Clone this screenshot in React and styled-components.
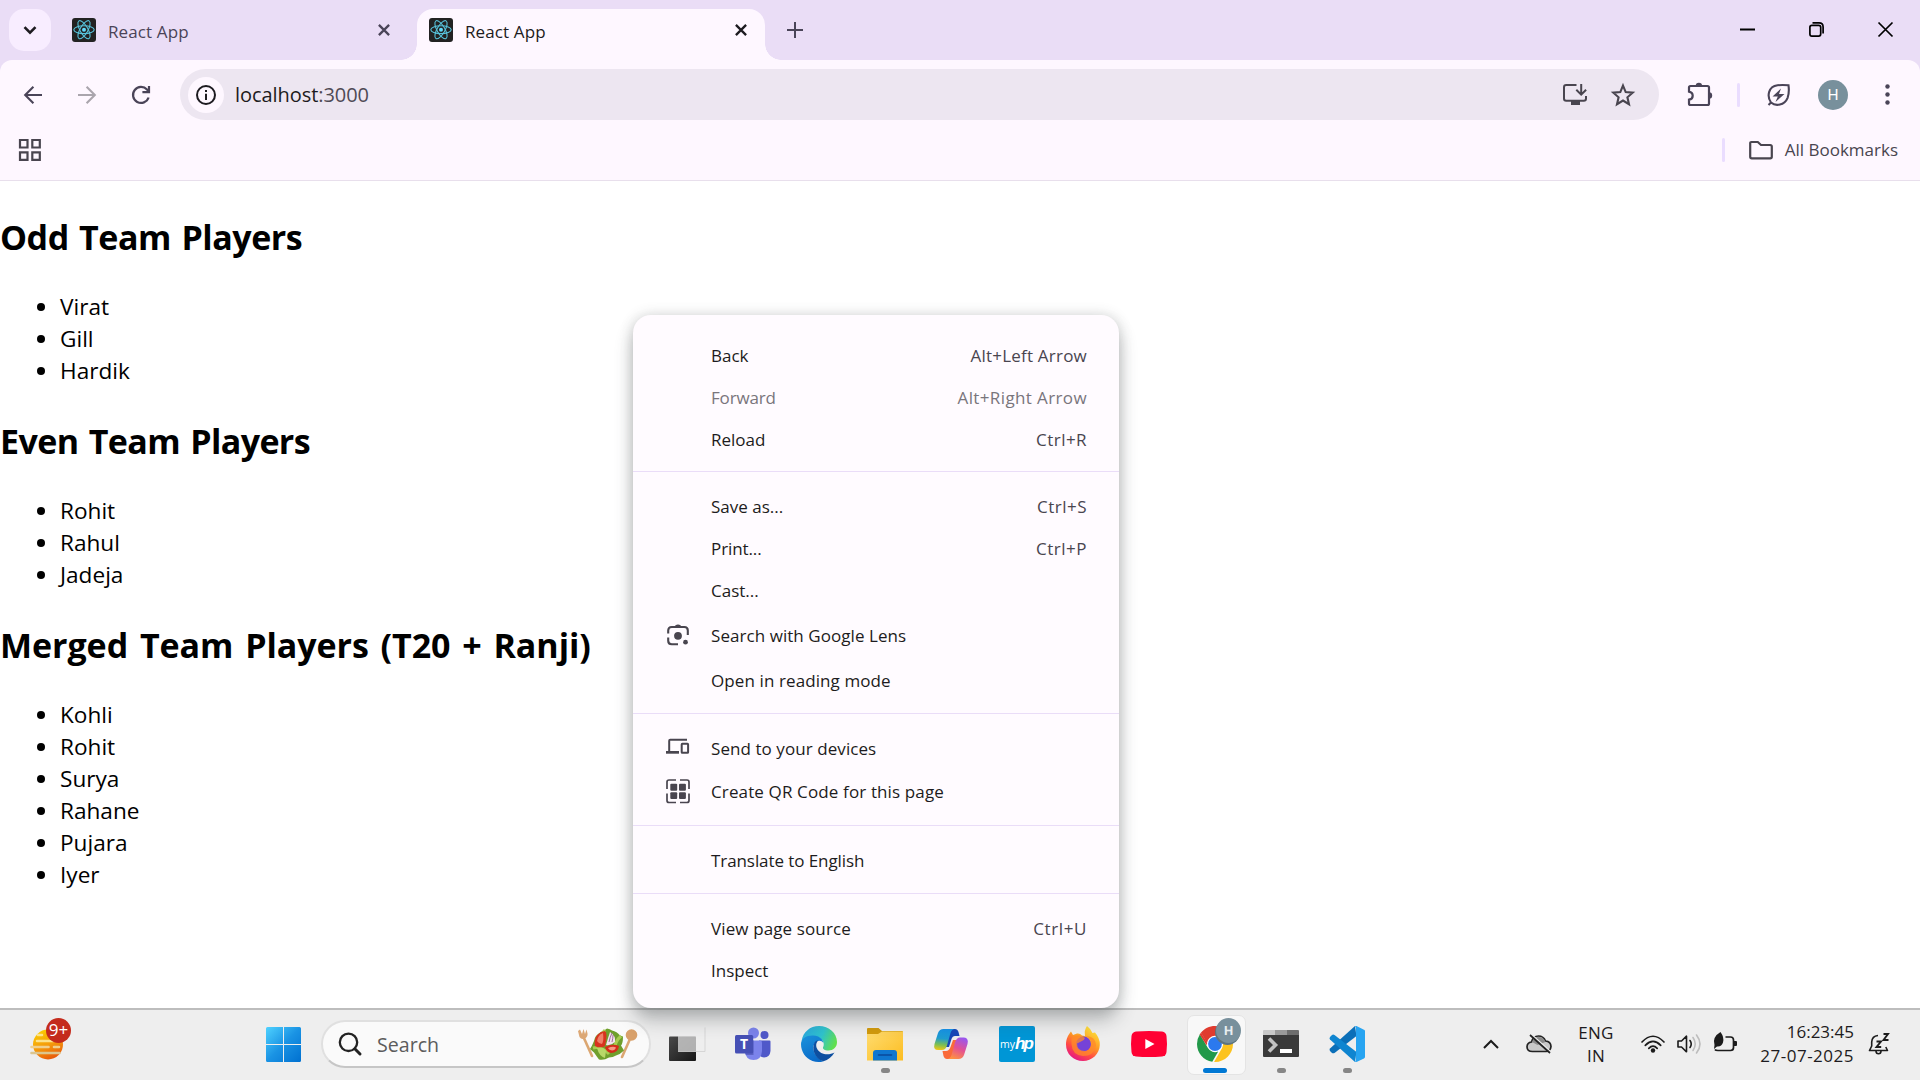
import React from "react";
import styled, { createGlobalStyle, css } from "styled-components";

const GlobalStyle = createGlobalStyle`
  * { box-sizing: border-box; }
  html, body { margin: 0; padding: 0; background: #fff; }
  body { font-family: "Open Sans", "Noto Sans", sans-serif; overflow: hidden; }
`;

/* ---------- shared ---------- */

const Screen = styled.div`
  position: relative;
  width: 1920px;
  height: 1080px;
  display: flex;
  flex-direction: column;
  overflow: hidden;
  background: #fff;
`;

const Svg = styled.svg.attrs((p) => ({
  viewBox: `0 0 ${p.$vw || p.$w} ${p.$vh || p.$vw || p.$h || p.$w}`,
}))`
  display: block;
  flex: none;
  width: ${(p) => p.$w}px;
  height: ${(p) => p.$h || p.$w}px;
  overflow: visible;
`;

const Label = styled.span`
  white-space: nowrap;
  font-size: ${(p) => p.$size || 17}px;
  line-height: 24px;
  letter-spacing: ${(p) => p.$ls || 0}px;
  color: ${(p) => p.$color || "#1d1b20"};
`;

/* ---------- tab strip ---------- */

const BrowserTop = styled.div`
  flex: none;
  height: 181px;
  display: flex;
  flex-direction: column;
  background: #eaddf6;
`;

const TabStrip = styled.div`
  flex: none;
  height: 60px;
  display: flex;
  align-items: flex-start;
  padding: 9px 0 0 9px;
`;

const TabSearch = styled.div`
  width: 42px;
  height: 42px;
  border-radius: 15px;
  background: #f8edff;
  display: flex;
  align-items: center;
  justify-content: center;
`;

const Tab = styled.div`
  position: relative;
  width: ${(p) => p.$width}px;
  height: ${(p) => (p.$active ? 51 : 42)}px;
  margin-left: ${(p) => p.$gap}px;
  padding: 9px 15px 9px 12px;
  display: flex;
  align-items: flex-start;
  gap: 12px;
  ${(p) =>
    p.$active &&
    css`
      background: #fef7ff;
      border-radius: 16px 16px 0 0;
      &::before,
      &::after {
        content: "";
        position: absolute;
        bottom: 0;
        width: 16px;
        height: 16px;
      }
      &::before {
        left: -16px;
        background: radial-gradient(circle at 0 0, transparent 15.5px, #fef7ff 16px);
      }
      &::after {
        right: -16px;
        background: radial-gradient(circle at 100% 0, transparent 15.5px, #fef7ff 16px);
      }
    `}
`;

const TabTitle = styled(Label)`
  flex: 1;
  padding-top: 2px;
`;

const CloseWrap = styled.div`
  width: 18px;
  height: 24px;
  display: flex;
  align-items: center;
  justify-content: center;
`;

const NewTab = styled.div`
  width: 42px;
  height: 42px;
  margin-left: 9px;
  display: flex;
  align-items: center;
  justify-content: center;
`;

const WindowControls = styled.div`
  margin-left: auto;
  display: flex;
  height: 40px;
`;

const WindowButton = styled.div`
  width: 69px;
  height: 40px;
  display: flex;
  align-items: center;
  justify-content: center;
`;

/* ---------- toolbar ---------- */

const ToolbarArea = styled.div`
  flex: 1;
  display: flex;
  flex-direction: column;
  background: #fef7ff;
  border-radius: 12px 12px 0 0;
  border-bottom: 1px solid #e8dfec;
`;

const Toolbar = styled.div`
  height: 69px;
  padding: 0 6px 0 6px;
  display: flex;
  align-items: center;
`;

const ToolButton = styled.div`
  width: 54px;
  height: 51px;
  display: flex;
  align-items: center;
  justify-content: center;
`;

const Omnibox = styled.div`
  width: 1479px;
  height: 51px;
  margin-left: 12px;
  padding: 0 12px 0 8px;
  border-radius: 26px;
  background: #ede6f1;
  display: flex;
  align-items: center;
`;

const SiteInfo = styled.div`
  width: 36px;
  height: 36px;
  border-radius: 50%;
  background: #fef7ff;
  display: flex;
  align-items: center;
  justify-content: center;
  margin-right: 11px;
`;

const Url = styled(Label)`
  flex: 1;
  line-height: 28px;
  span { color: #4f4a55; }
`;

const OmniAction = styled.div`
  width: 48px;
  display: flex;
  align-items: center;
  justify-content: center;
`;

const ToolbarEnd = styled.div`
  flex: 1;
  display: flex;
  align-items: center;
  padding-left: 14px;
`;

const VBar = styled.div`
  width: 3px;
  height: 24px;
  border-radius: 2px;
  background: #eaddff;
  margin: ${(p) => p.$m || "0"};
`;

const Avatar = styled.div`
  width: 30px;
  height: 30px;
  margin: 0 12px;
  border-radius: 50%;
  background: #78909c;
  color: #fff;
  font: 400 15.5px/30px Roboto, sans-serif;
  text-align: center;
`;

const BookmarksBar = styled.div`
  height: 51px;
  display: flex;
  align-items: center;
  padding: 0 22px 9px 19px;
`;

const AllBookmarks = styled.div`
  margin-left: auto;
  display: flex;
  align-items: center;
`;

const FolderWrap = styled.div`
  margin-right: 12px;
`;

/* ---------- page ---------- */

const Page = styled.main`
  flex: 1;
  padding-top: 32px;
  color: #000;
`;

const TeamHeading = styled.h2`
  margin: 0 0 30px;
  font-size: 34px;
  line-height: 48px;
  font-weight: 700;
  letter-spacing: ${(p) => p.$ls}px;
  word-spacing: ${(p) => p.$ws}px;
`;

const TeamList = styled.ul`
  margin: 0 0 30px;
  padding: 0 0 0 60px;
  font-size: 22.6px;
  line-height: 32px;
`;

/* ---------- context menu ---------- */

const Menu = styled.div`
  position: absolute;
  left: 633px;
  top: 315px;
  width: 486px;
  height: 693px;
  padding-top: 20px;
  border-radius: 18px;
  background: #fffbff;
  box-shadow: 0 12px 18px rgba(60, 64, 67, 0.32), 0 0 14px rgba(60, 64, 67, 0.2);
  z-index: 5;
`;

const MenuRow = styled.div`
  height: ${(p) => p.$h || 42}px;
  padding: 0 32px 0 33px;
  display: flex;
  align-items: center;
`;

const MenuIcon = styled.div`
  width: 24px;
  margin-right: 21px;
  padding-bottom: 2px;
`;

const MenuLabel = styled(Label)`
  flex: 1;
`;

const MenuDivider = styled.div`
  height: 1px;
  margin: ${(p) => p.$top || 11}px 0 ${(p) => p.$bottom || 14}px;
  background: #eaddf8;
`;

/* ---------- taskbar ---------- */

const Taskbar = styled.div`
  flex: none;
  height: 72px;
  border-top: 2px solid #bdbdbd;
  background: #eee;
  display: flex;
  align-items: center;
  padding-bottom: 2px;
`;

const Widgets = styled.div`
  position: relative;
  width: 33px;
  margin-left: 30px;
`;

const Badge = styled.div`
  position: absolute;
  left: 16px;
  top: -11px;
  width: 25px;
  height: 25px;
  border-radius: 50%;
  background: #c42b1c;
  color: #fff;
  font-size: 17px;
  line-height: 24px;
  text-align: center;
`;

const StartButton = styled.div`
  width: 36px;
  margin-left: 203px;
`;

const SearchBox = styled.div`
  width: 330px;
  height: 48px;
  margin-left: 19px;
  padding: 0 11px 0 15px;
  border: 2px solid #e0e0e0;
  border-bottom-color: #c6c6c6;
  border-radius: 24px;
  background: #fafafa;
  display: flex;
  align-items: center;
`;

const SearchLabel = styled(Label)`
  flex: 1;
  margin-left: 15px;
  padding-top: 1px;
`;

const Apps = styled.div`
  display: flex;
  margin-left: 3px;
`;

const AppSlot = styled.div`
  position: relative;
  width: 66px;
  height: 60px;
  display: flex;
  align-items: center;
  justify-content: center;
  &::before {
    content: "";
    display: ${(p) => (p.$active ? "block" : "none")};
    position: absolute;
    left: 5px;
    top: 1px;
    width: 57px;
    height: 58px;
    border-radius: 7px;
    background: #f8f8f8;
    border: 1.5px solid #e4e4e4;
  }
  &::after {
    content: "";
    display: ${(p) => (p.$open || p.$active ? "block" : "none")};
    position: absolute;
    left: ${(p) => (p.$active ? 21 : 28.5)}px;
    top: 54px;
    width: ${(p) => (p.$active ? 24 : 9)}px;
    height: 5px;
    border-radius: 3px;
    background: ${(p) => (p.$active ? "#0078d4" : "#868686")};
  }
  & > * { position: relative; }
`;

const MyHp = styled.div`
  width: 36px;
  height: 36px;
  border-radius: 2px;
  background: #0096d6;
  color: #fff;
  display: flex;
  align-items: center;
  justify-content: center;
  font: 10.5px/36px "Open Sans", sans-serif;
  b {
    font: italic 700 17px/34px "Liberation Sans Narrow", "Liberation Sans", sans-serif;
    letter-spacing: -2px;
    margin-right: 2px;
  }
`;

const ProfileDot = styled.div`
  position: absolute;
  left: 19px;
  top: -8px;
  width: 25px;
  height: 25px;
  border-radius: 50%;
  background: #78909c;
  box-shadow: -1px 2px 0 #5d747f;
  color: #e8eef0;
  font: 700 13px/25px Roboto, sans-serif;
  text-align: center;
`;

const IconBox = styled.div`
  position: relative;
  width: 36px;
  height: 36px;
`;

const Tray = styled.div`
  margin-left: auto;
  padding-right: 16px;
  display: flex;
  align-items: center;
`;

const TrayItem = styled.div`
  width: ${(p) => p.$w}px;
  display: flex;
  justify-content: center;
`;

const Stack = styled.div`
  width: ${(p) => p.$w}px;
  display: flex;
  flex-direction: column;
  align-items: ${(p) => p.$align};
  span { line-height: ${(p) => p.$lh || 24}px; }
`;

/* ---------- icons ---------- */

const ReactIcon = () => (
  <Svg $w={24}>
    <rect width="24" height="24" rx="3" fill="#222" />
    <g fill="none" stroke="#58c4dc" strokeWidth="1.1">
      <ellipse cx="12" cy="11.7" rx="10.2" ry="3.9" />
      <ellipse cx="12" cy="11.7" rx="10.2" ry="3.9" transform="rotate(60 12 11.7)" />
      <ellipse cx="12" cy="11.7" rx="10.2" ry="3.9" transform="rotate(120 12 11.7)" />
    </g>
    <circle cx="12" cy="11.7" r="2" fill="#61dafb" />
  </Svg>
);

const CloseIcon = ({ color }) => (
  <Svg $w={12}>
    <path d="M.9.9l10.2 10.2M11.1.9L.9 11.1" stroke={color} strokeWidth="2.3" fill="none" />
  </Svg>
);

const BackIcon = ({ color, flip }) => (
  <Svg $w={18}>
    <path
      d="M18 9H1.6M9.4 .8L1.2 9l8.2 8.2"
      fill="none"
      stroke={color}
      strokeWidth="2.1"
      transform={flip ? "matrix(-1 0 0 1 18 0)" : undefined}
    />
  </Svg>
);

const ReloadIcon = () => (
  <Svg $w={18}>
    <path d="M16.6 11.5A8 8 0 1 1 15 3.6L16.8 5.6" fill="none" stroke="#4a4458" strokeWidth="2.2" />
    <path d="M17 0v6.2h-6.6" fill="none" stroke="#4a4458" strokeWidth="2.2" />
  </Svg>
);

const InstallIcon = () => (
  <Svg $w={24}>
    <path d="M13.5 2H3.2Q1 2 1 4.200V15.500Q1 17.700 3.200 17.700H20.800Q23 17.700 23 15.500V13" fill="none" stroke="#49454f" strokeWidth="2" />
    <path d="M8 18h9v4H8z" fill="#49454f" />
    <path d="M18.200 1v10.200M13.300 6.800l4.900 4.900 4.900-4.900" fill="none" stroke="#49454f" strokeWidth="2" />
  </Svg>
);

const StarIcon = () => (
  <Svg $w={24}>
    <path d="M12 2.600l2.700 6.500 7 .6-5.300 4.600 1.600 6.900L12 17.500l-6 3.700 1.600-6.900-5.300-4.600 7-.6z" fill="none" stroke="#49454f" strokeWidth="2.100" />
  </Svg>
);

const ExtensionIcon = () => (
  <Svg $w={24}>
    <path
      d="M2.500 3H19.500Q21 3 21 4.500V20.500Q21 22 19.500 22H2.500Q1 22 1 20.500V16.700Q4.700 16 4.700 12.700Q4.700 9.300 1 8.600V4.500Q1 3 2.500 3Z"
      fill="none" stroke="#4a4458" strokeWidth="2.200"
    />
    <path d="M7.700 3a3.200 3.200 0 0 1 6.400 0zM21 9.300a3.200 3.200 0 0 1 0 6.400z" fill="#4a4458" />
  </Svg>
);

const LeafIcon = () => (
  <Svg $w={24}>
    <path d="M4 19.500C-.5 13 1.500 3.500 10.500 2.300C14 1.800 18.500 2 21.500 2.300C22 6 22 11 20.600 14.800C17.500 22.500 8.500 23.500 4 19.500zM4.500 19L1.500 22" fill="none" stroke="#4a4458" strokeWidth="2.100" />
    <path d="M14 5.500l-8.500 8h5.300l-2.300 5.500 9-8h-5.500z" fill="#4a4458" />
  </Svg>
);

const FolderIcon = () => (
  <Svg $w={24} $h={20} $vw={24} $vh={20}>
    <path d="M1.200 3.200Q1.200 2 2.400 2H8.800L12 5H21.200Q22.800 5 22.800 6.500V16.800Q22.800 18.300 21.200 18.300H2.800Q1.200 18.300 1.200 16.800z" fill="none" stroke="#49454f" strokeWidth="2.200" />
  </Svg>
);

const LensIcon = () => (
  <Svg $w={24}>
    <g fill="none" stroke="#49454f" strokeWidth="2.100">
      <path d="M2.200 10.500V7.500Q2.200 4 5.700 4H18.300Q21.800 4 21.800 7.500V12" />
      <path d="M2.200 14.500V17.700Q2.200 21.200 5.700 21.200H12" />
    </g>
    <path d="M8.500 4.300Q9 1.600 12 1.600T15.500 4.300z" fill="#49454f" />
    <circle cx="12" cy="12.800" r="3.900" fill="#49454f" />
    <circle cx="19.500" cy="19.200" r="2.400" fill="#49454f" />
  </Svg>
);

const DevicesIcon = () => (
  <Svg $w={24}>
    <path d="M3.200 17V4.800Q3.200 3.800 4.200 3.800H21" fill="none" stroke="#49454f" strokeWidth="2" />
    <path d="M0 15h13v2.700H0z" fill="#49454f" />
    <rect x="15.700" y="7.800" width="6.400" height="9" rx=".6" fill="none" stroke="#49454f" strokeWidth="2" />
  </Svg>
);

const QrIcon = () => (
  <Svg $w={24}>
    <path d="M10 1H3Q1 1 1 3V10M14 1H21Q23 1 23 3V10M10 23.500H3Q1 23.500 1 21.500V14.500M14 23.500H21Q23 23.500 23 21.500V14.500" fill="none" stroke="#49454f" strokeWidth="1.700" />
    <g fill="#49454f">
      <rect x="4.300" y="4.800" width="6.900" height="6.900" rx="1" />
      <rect x="13" y="4.800" width="6.900" height="6.900" rx="1" />
      <rect x="4.300" y="13.200" width="6.900" height="6.900" rx="1" />
      <rect x="13" y="13.200" width="6.900" height="6.900" rx="1" />
    </g>
  </Svg>
);

const SunIcon = () => (
  <Svg $w={33} $h={31} $vw={33} $vh={31}>
    <defs>
      <linearGradient id="sun" x1="0.2" y1="0" x2="0.6" y2="1">
        <stop offset="0" stopColor="#fbd000" />
        <stop offset=".55" stopColor="#f49a0b" />
        <stop offset="1" stopColor="#e8590c" />
      </linearGradient>
    </defs>
    <circle cx="18" cy="15.500" r="15" fill="url(#sun)" />
    <g strokeLinecap="round" strokeWidth="2.600">
      <path d="M8 6h4M7 12h16" stroke="#fce28a" />
      <path d="M1.500 18h17M24 18h5" stroke="#f0cf8c" />
      <path d="M1.500 24h28" stroke="#dcc58e" />
    </g>
  </Svg>
);

const WindowsIcon = () => (
  <Svg $w={35}>
    <defs>
      <linearGradient id="win" x1="0" y1="0" x2="1" y2="1">
        <stop offset="0" stopColor="#4fd2ff" />
        <stop offset=".5" stopColor="#1a93e4" />
        <stop offset="1" stopColor="#0070d0" />
      </linearGradient>
    </defs>
    <path d="M1.500 0H17V17H0V1.500Q0 0 1.500 0zM18 0H33.500Q35 0 35 1.500V17H18zM0 18H17V35H1.500Q0 35 0 33.500zM18 18H35V33.500Q35 35 33.500 35H18z" fill="url(#win)" />
  </Svg>
);

const SearchIcon = () => (
  <Svg $w={24}>
    <circle cx="10.500" cy="10.300" r="8.700" fill="none" stroke="#222" strokeWidth="2.300" />
    <path d="M16.800 16.800l5.200 5.200" stroke="#222" strokeWidth="3" strokeLinecap="round" />
  </Svg>
);

const SaladIcon = () => (
  <Svg $w={61} $h={32} $vw={61} $vh={32}>
    <path d="M6 8l9 20" stroke="#dba671" strokeWidth="2.600" strokeLinecap="round" />
    <path d="M1 3l1.500 6q2 3 5.500 1.500 3-2 2.500-5L9.500 1.500 8 6 6.500 1 5 6 3 1.500z" fill="#dca876" />
    <path d="M53 11L45 29" stroke="#dba671" strokeWidth="2.600" strokeLinecap="round" />
    <circle cx="54.500" cy="7" r="5.800" fill="#d8a06a" />
    <path d="M13 21q2-3 4-8 1-6 7-9 3-1 6-3.500 3 .5 5 2 5 1 8 5l3 1q0 7-2 9l3 5q-4 4-8 5-3 2-7 2-5 3-10 2-3-4-5-7z" fill="#6f9f2c" />
    <path d="M28 2q-6 6-6 14M44 8q-7 6-6 14M16 20q8-2 16 6" stroke="#a9cc51" strokeWidth="3" fill="none" />
    <path d="M18 18q-2-9 6-14l4-1q3 2 0 15-5 3-10 0z" fill="#d8331f" />
    <path d="M20 13q1-6 6-8 1 8-1 11-3 0-5-3z" fill="#f0806a" />
    <path d="M29 17q2-7 4-13 6 4 5 10-4 4-9 3z" fill="#f3e4ee" />
    <path d="M32 14q1-5 3-9M35 14q1-4 1-7" stroke="#a0699a" strokeWidth="1" fill="none" />
    <path d="M28 19q8-4 14-1-1 7-8 7-5-1-6-6z" fill="#d42c1b" />
    <path d="M31 20q5-2 8-.5-1 3-4 3-3-.5-4-2.500z" fill="#f49a84" />
    <path d="M20 20q6-2 9 3l-1 7q-6-2-8-10z" fill="#b8d868" />
  </Svg>
);

const TaskViewIcon = () => (
  <Svg $w={36}>
    <defs>
      <linearGradient id="tv" x1="0" y1="0" x2="1" y2="1">
        <stop offset="0" stopColor="#4a4a4a" />
        <stop offset="1" stopColor="#161616" />
      </linearGradient>
    </defs>
    <rect x="0" y="10.500" width="27" height="24.500" rx="1" fill="url(#tv)" />
    <rect x="9" y="1.500" width="27" height="24" rx="1" fill="#eee" fillOpacity=".72" />
    <path d="M9 10.500H27V25.500H9z" fill="#aaa" fillOpacity=".45" />
    <path d="M9 25.500H36V1.500" fill="none" stroke="#cfcfcf" strokeWidth=".8" />
  </Svg>
);

const TeamsIcon = () => (
  <Svg $w={36}>
    <circle cx="18.500" cy="7" r="5.500" fill="#7b83eb" />
    <circle cx="29.500" cy="9" r="4" fill="#5059c9" />
    <path d="M24 14.500H34.500Q35.500 14.500 35.500 15.700V25Q35 31 29 31.500 24 31 23 26z" fill="#5059c9" />
    <path d="M11 14.500H25Q27 14.500 27 16.500V25Q26.500 34 18.500 34 10.500 34 10 25z" fill="#7b83eb" />
    <path d="M10 14.500H18.500V29H10.800Q10 27 10 25z" fill="#5b62c4" />
    <rect x="0" y="9" width="18.200" height="18.500" rx="1.500" fill="#4650b5" />
    <text x="9.100" y="23" textAnchor="middle" fill="#fff" fontSize="14" fontWeight="700" fontFamily="Open Sans, sans-serif">T</text>
  </Svg>
);

const EdgeIcon = () => (
  <Svg $w={36}>
    <defs>
      <linearGradient id="e1" x1="0" y1=".3" x2="1" y2=".6">
        <stop offset="0" stopColor="#2aa9dd" />
        <stop offset=".55" stopColor="#2fc3cd" />
        <stop offset="1" stopColor="#62e04a" />
      </linearGradient>
      <linearGradient id="e2" x1="0" y1="0" x2=".4" y2="1">
        <stop offset="0" stopColor="#1b93dc" />
        <stop offset="1" stopColor="#0b6cc9" />
      </linearGradient>
    </defs>
    <path d="M.6 15C2 6 9 0 18 0 28 0 36 7 36 16 36 21.500 32 24.500 27.500 24.500 23.500 24.500 21.500 23 22 21.500 24.500 17 21 11 14 10.500 8 10 3 12.500.6 15z" fill="url(#e1)" />
    <path d="M0 18C0 12.500 6 9 12.500 9.500 18.500 10 22 13 22.300 17 20.500 13.500 14 14 12.500 20 11.500 27 17 33.500 22.500 35.200 19 36.500 15 36.300 11.500 35 4.500 32 0 26 0 18z" fill="url(#e2)" />
    <path d="M12.700 19C11 26 16 34 22.500 35.200 27 34 31 31 33.500 26.500 28 29.500 19 29 16 22.500 15 20.500 14.500 17 17.500 14.300 14.500 14.500 13.200 16.500 12.700 19z" fill="#0d4fa0" />
  </Svg>
);

const ExplorerIcon = () => (
  <Svg $w={36}>
    <defs>
      <linearGradient id="fx" x1="0" y1="0" x2="1" y2="1">
        <stop offset="0" stopColor="#ffdc70" />
        <stop offset="1" stopColor="#fcbd21" />
      </linearGradient>
    </defs>
    <path d="M0 10V3Q0 2 1 2H11.500L15 5H35Q36 5 36 6V10z" fill="#d29a0c" />
    <path d="M0 8H11L15 5.500H36V34.500H0z" fill="url(#fx)" />
    <path d="M6 34.500V27Q6 24 9 24H27Q30 24 30 27V34.500z" fill="#0f77d0" />
    <path d="M11.500 29H24.500" stroke="#0a4a9a" strokeWidth="1.600" strokeLinecap="round" />
  </Svg>
);

const CopilotIcon = () => (
  <Svg $w={34}>
    <defs>
      <linearGradient id="c1" x1=".4" y1="0" x2=".3" y2="1">
        <stop offset="0" stopColor="#1592e6" />
        <stop offset=".45" stopColor="#1f9ccf" />
        <stop offset=".75" stopColor="#7dbf52" />
        <stop offset="1" stopColor="#efc817" />
      </linearGradient>
      <linearGradient id="c2" x1=".7" y1="0" x2=".3" y2="1">
        <stop offset="0" stopColor="#9a57ee" />
        <stop offset=".5" stopColor="#e35193" />
        <stop offset="1" stopColor="#ff9240" />
      </linearGradient>
    </defs>
    <path d="M15 2H21Q23.500 2 24.500 5L25.500 9H21Q18.500 9 17.500 12L15 20H9L13 5z" fill="#1546b8" />
    <path d="M9.500 2H20.500Q17.500 2.500 16.500 6L13 18.500Q11.500 23 8 23H4Q-1 23 .5 17L4 6Q5.500 2 9.500 2z" fill="url(#c1)" />
    <path d="M19 32H13Q10.500 32 9.500 29L8.500 24H12Q15 24 16.500 20L19 13H25L21 29z" fill="#fa6a3a" />
    <path d="M24.500 32H13.500Q16.500 31.500 17.500 28L21 15.500Q22.500 10.500 26 10.500H30Q35 11 33.500 17L30 28Q28.500 32 24.500 32z" fill="url(#c2)" />
  </Svg>
);

const FirefoxIcon = () => (
  <Svg $w={36}>
    <defs>
      <linearGradient id="f1" x1=".8" y1=".1" x2=".3" y2="1">
        <stop offset="0" stopColor="#ffe03a" />
        <stop offset=".4" stopColor="#ff9a24" />
        <stop offset=".7" stopColor="#ff4a45" />
        <stop offset="1" stopColor="#e31587" />
      </linearGradient>
    </defs>
    <path d="M22 0Q26 3 27.500 7L30 6.500Q35 12 34.800 19C34.500 28 27 35 18 35 8.500 35 1 28 1 18.500 1 12 4 8 6 5.500L8 9 12 7.500Q15 7 17 9.500L20 10Q19 4 22 0z" fill="url(#f1)" />
    <circle cx="18.500" cy="18" r="7.500" fill="#7542d8" />
    <path d="M6.500 12Q12 8 17 10L20 12Q19 15 16 15.500L12 17.500Q12 25 20 25 26 24 26.500 17 25 11 20 10 31 10 31 20 29 30 18 30 7 29 6.500 18z" fill="#ff8b2a" fillOpacity=".75" />
  </Svg>
);

const YoutubeIcon = () => (
  <Svg $w={36}>
    <path d="M5 5.500Q18 4.300 31 5.500 35 6 35.500 10 36.500 18 35.500 26 35 30 31 30.500 18 31.700 5 30.500 1 30 .5 26-.5 18 .5 10 1 6 5 5.500z" fill="#ff0033" />
    <path d="M14.300 13v10L23.500 18z" fill="#fff" />
  </Svg>
);

const ChromeIcon = () => (
  <Svg $w={36} $vw={24}>
    <circle cx="12" cy="12" r="6" fill="#fff" />
    <path fill="#e03b2f" d="M12 0C8.210 0 4.831 1.757 2.632 4.501l3.953 6.848A5.454 5.454 0 0 1 12 6.545h10.691A12 12 0 0 0 12 0z" />
    <path fill="#22994a" d="M1.931 5.470A11.943 11.943 0 0 0 0 12c0 6.012 4.420 10.991 10.189 11.864l3.953-6.847a5.450 5.450 0 0 1-6.865-2.290z" />
    <path fill="#e03b2f" d="M2.700 4.400l4.100 7-.5 1.400L1.800 5.700z" />
    <path fill="#fcc31e" d="M15.273 7.636a5.446 5.446 0 0 1 1.450 7.090l-5.344 9.258c.206.010.413.016.621.016 6.627 0 12-5.373 12-12 0-1.540-.29-3.011-.818-4.364z" />
    <circle cx="12" cy="12" r="4.600" fill="#2b79ee" />
  </Svg>
);

const TerminalIcon = () => (
  <Svg $w={36}>
    <path d="M0 9H36V30Q36 31 35 31H1Q0 31 0 30z" fill="#3a3a3a" />
    <path d="M1 4H12V9H0V5Q0 4 1 4z" fill="#c8c8c8" />
    <path d="M12 4H24V9H12z" fill="#9a9a9a" />
    <path d="M24 4H35Q36 4 36 5V9H24z" fill="#6e6e6e" />
    <path d="M6 12.500l6.500 6.500L6 25.500" fill="none" stroke="#c4c4c4" strokeWidth="3.600" />
    <path d="M17 23H29V27H17z" fill="#fff" />
  </Svg>
);

const VsCodeIcon = () => (
  <Svg $w={36}>
    <path d="M26 0L1 22.500Q0 23.500 1 25L3 27Q4 27.700 5.500 27L27.500 10z" fill="#0b6fb8" />
    <path d="M1 11Q0 12.500 1 13.500L26 36 27.500 26 5.500 9Q4 8.200 3 9z" fill="#0f85d0" />
    <path d="M27.500 0Q26.500 0 26 0L27 2V34L26 36Q27 36 28 35.700L35 32.400Q36 32 36 31V5Q36 4.200 35 3.700z" fill="#27a4f1" />
  </Svg>
);

const CloudOffIcon = () => (
  <Svg $w={26} $h={20} $vw={26} $vh={20}>
    <path d="M6.500 17.500Q1 17.500 1 12.800 1.200 8.500 5.500 8 7 2 12.500 2 17.500 2 19.500 7 24.800 7.500 25 12.500 24.500 17.500 20 17.500z" fill="#c9c9c9" stroke="#222" strokeWidth="1.700" />
    <path d="M6 8q2-5 6.500-5 5 0 7 5l-8 3z" fill="#8b8b8b" />
    <path d="M5 0l20 18" stroke="#eee" strokeWidth="1.500" />
    <path d="M4 1l20 18" stroke="#222" strokeWidth="1.700" />
  </Svg>
);

const WifiIcon = () => (
  <Svg $w={24} $h={18} $vw={24} $vh={18}>
    <g fill="none" stroke="#1b1b1b" strokeWidth="1.700" strokeLinecap="round">
      <path d="M1 7Q12-4.500 23 7" />
      <path d="M4.300 10.300Q12 2.500 19.700 10.300" />
      <path d="M7.800 13.300Q12 9 16.200 13.300" />
    </g>
    <circle cx="12" cy="15.500" r="2.200" fill="#1b1b1b" />
  </Svg>
);

const VolumeIcon = () => (
  <Svg $w={24} $h={20} $vw={24} $vh={20}>
    <path d="M1 7H4.500L9.500 2.200V17.800L4.500 13H1z" fill="none" stroke="#1b1b1b" strokeWidth="1.600" strokeLinejoin="round" />
    <path d="M13 6.500Q15.500 10 13 13.500" fill="none" stroke="#1b1b1b" strokeWidth="1.600" strokeLinecap="round" />
    <path d="M16 3.500Q20.500 10 16 16.500M19.500 1Q26.500 10 19.500 19" fill="none" stroke="#bcbcbc" strokeWidth="1.600" strokeLinecap="round" />
  </Svg>
);

const BatteryIcon = () => (
  <Svg $w={24} $h={20} $vw={24} $vh={20}>
    <path d="M12.500 3H17.500Q20.500 3 20.500 6V13.500Q20.500 16.500 17.500 16.500H5Q2.500 16.500 2 15.500" fill="none" stroke="#1b1b1b" strokeWidth="1.700" />
    <path d="M21 7h2q1 0 1 1v3q0 1-1 1H21z" fill="#1b1b1b" />
    <path d="M7.500-2Q11.500 3.500 10 8.500 8.500 13 4 12.500L1 15 1.500 11Q-1 3 7.500-2z" fill="#1b1b1b" />
  </Svg>
);

const BellIcon = () => (
  <Svg $w={22} $vw={22} $h={22}>
    <path d="M10 2.500Q4 3 3.700 9V13L1.500 17.500H19.500L17.800 14" fill="none" stroke="#1b1b1b" strokeWidth="1.600" strokeLinejoin="round" />
    <path d="M8 18q0 2.800 2.500 2.800T13 18" fill="none" stroke="#1b1b1b" strokeWidth="1.600" />
    <path d="M8.500 8.500H13L8.500 14H13.200M15.500 1H20L15.500 7H20.500" fill="none" stroke="#1b1b1b" strokeWidth="1.900" />
  </Svg>
);

/* ---------- data ---------- */

const teams = [
  { title: "Odd Team Players", ls: -0.45, ws: 2, players: ["Virat", "Gill", "Hardik"] },
  { title: "Even Team Players", ls: -0.6, ws: 2, players: ["Rohit", "Rahul", "Jadeja"] },
  {
    title: "Merged Team Players (T20 + Ranji)",
    ls: -0.05,
    ws: 3,
    players: ["Kohli", "Rohit", "Surya", "Rahane", "Pujara", "Iyer"],
  },
];

const menu = [
  { label: "Back", keys: "Alt+Left Arrow", ks: 0.22 },
  { label: "Forward", keys: "Alt+Right Arrow", ks: 0.38, ls: -0.15, disabled: true },
  { label: "Reload", keys: "Ctrl+R", ks: 0.45 },
  { divider: true, top: 10 },
  { label: "Save as...", keys: "Ctrl+S", ks: 0.5 },
  { label: "Print...", keys: "Ctrl+P", ks: 0.5, ls: -0.1 },
  { label: "Cast..." },
  { label: "Search with Google Lens", icon: <LensIcon />, h: 48, ls: 0.06 },
  { label: "Open in reading mode", ls: 0.1 },
  { divider: true, bottom: 13 },
  { label: "Send to your devices", icon: <DevicesIcon />, h: 43, ls: 0.07 },
  { label: "Create QR Code for this page", icon: <QrIcon />, h: 43, ls: 0.13 },
  { divider: true, top: 12 },
  { label: "Translate to English", ls: -0.08 },
  { divider: true },
  { label: "View page source", keys: "Ctrl+U", ks: 0.6, ls: 0.12 },
  { label: "Inspect" },
];

const apps = [
  { id: "taskview", icon: <TaskViewIcon /> },
  { id: "teams", icon: <TeamsIcon /> },
  { id: "edge", icon: <EdgeIcon /> },
  { id: "explorer", icon: <ExplorerIcon />, open: true },
  { id: "copilot", icon: <CopilotIcon /> },
  { id: "myhp", icon: <MyHp>my<b>hp</b></MyHp> },
  { id: "firefox", icon: <FirefoxIcon /> },
  { id: "youtube", icon: <YoutubeIcon /> },
  {
    id: "chrome",
    icon: (
      <IconBox>
        <ChromeIcon />
        <ProfileDot>H</ProfileDot>
      </IconBox>
    ),
    active: true,
  },
  { id: "terminal", icon: <TerminalIcon />, open: true },
  { id: "vscode", icon: <VsCodeIcon />, open: true },
];

export default function App() {
  return (
    <Screen>
      <GlobalStyle />
      <BrowserTop>
        <TabStrip>
          <TabSearch>
            <Svg $w={14}>
              <path d="M1.500 4.200L7 9.700l5.500-5.500" fill="none" stroke="#1d1b20" strokeWidth="2.600" />
            </Svg>
          </TabSearch>
          <Tab $width={348} $gap={9}>
            <ReactIcon />
            <TabTitle $color="#4a4458" $ls={0.12}>React App</TabTitle>
            <CloseWrap><CloseIcon color="#4a4458" /></CloseWrap>
          </Tab>
          <Tab $width={348} $gap={9} $active>
            <ReactIcon />
            <TabTitle $ls={0.12}>React App</TabTitle>
            <CloseWrap><CloseIcon color="#1d1b20" /></CloseWrap>
          </Tab>
          <NewTab>
            <Svg $w={16}>
              <path d="M8 0v16M0 8h16" stroke="#4a4458" strokeWidth="2" />
            </Svg>
          </NewTab>
          <WindowControls>
            <WindowButton>
              <Svg $w={15}><path d="M0 7.500h15" stroke="#000" strokeWidth="2" /></Svg>
            </WindowButton>
            <WindowButton>
              <Svg $w={15}>
                <rect x=".9" y="3.300" width="10.800" height="10.800" rx="2" fill="none" stroke="#000" strokeWidth="1.700" />
                <path d="M3.500.9H10Q14.100.9 14.100 5V11.500" fill="none" stroke="#000" strokeWidth="1.700" />
              </Svg>
            </WindowButton>
            <WindowButton>
              <Svg $w={15}><path d="M.5.5l14 14M14.500.5l-14 14" stroke="#000" strokeWidth="1.700" /></Svg>
            </WindowButton>
          </WindowControls>
        </TabStrip>

        <ToolbarArea>
          <Toolbar>
            <ToolButton><BackIcon color="#4a4458" /></ToolButton>
            <ToolButton><BackIcon color="#aaa5ad" flip /></ToolButton>
            <ToolButton><ReloadIcon /></ToolButton>
            <Omnibox>
              <SiteInfo>
                <Svg $w={20}>
                  <circle cx="10" cy="10" r="9" fill="none" stroke="#1d1b20" strokeWidth="2" />
                  <path d="M9 5h2v2H9zM9 8.800h2V15H9z" fill="#1d1b20" />
                </Svg>
              </SiteInfo>
              <Url $size={20} $ls={-0.06}>localhost<span>:3000</span></Url>
              <OmniAction><InstallIcon /></OmniAction>
              <OmniAction><StarIcon /></OmniAction>
            </Omnibox>
            <ToolbarEnd>
              <ToolButton><ExtensionIcon /></ToolButton>
              <VBar $m="0 12px 0 10px" />
              <ToolButton><LeafIcon /></ToolButton>
              <Avatar>H</Avatar>
              <ToolButton>
                <Svg $w={5} $h={21} $vw={5} $vh={21}>
                  <g fill="#4a4458">
                    <circle cx="2.500" cy="2.500" r="2.200" />
                    <circle cx="2.500" cy="10.500" r="2.200" />
                    <circle cx="2.500" cy="18.500" r="2.200" />
                  </g>
                </Svg>
              </ToolButton>
            </ToolbarEnd>
          </Toolbar>
          <BookmarksBar>
            <Svg $w={22}>
              <path d="M1 1h7.500v7.500H1zM13.300 1h7.500v7.500h-7.500zM1 13.300h7.500v7.500H1zM13.300 13.300h7.500v7.500h-7.500z" fill="none" stroke="#49454f" strokeWidth="2.200" />
            </Svg>
            <AllBookmarks>
              <VBar $m="0 24px 0 0" />
              <FolderWrap><FolderIcon /></FolderWrap>
              <Label $color="#49454f">All Bookmarks</Label>
            </AllBookmarks>
          </BookmarksBar>
        </ToolbarArea>
      </BrowserTop>

      <Page>
        {teams.map((t) => (
          <section key={t.title}>
            <TeamHeading $ls={t.ls} $ws={t.ws}>{t.title}</TeamHeading>
            <TeamList>
              {t.players.map((p) => (
                <li key={p}>{p}</li>
              ))}
            </TeamList>
          </section>
        ))}
      </Page>

      <Taskbar>
        <Widgets>
          <SunIcon />
          <Badge>9+</Badge>
        </Widgets>
        <StartButton><WindowsIcon /></StartButton>
        <SearchBox>
          <SearchIcon />
          <SearchLabel $size={19.6} $color="#5c5c5c">Search</SearchLabel>
          <SaladIcon />
        </SearchBox>
        <Apps>
          {apps.map((a) => (
            <AppSlot key={a.id} $open={a.open} $active={a.active}>
              {a.icon}
            </AppSlot>
          ))}
        </Apps>
        <Tray>
          <TrayItem $w={48}>
            <Svg $w={16} $h={10} $vw={16} $vh={10}>
              <path d="M1 9l7-7 7 7" fill="none" stroke="#1b1b1b" strokeWidth="2" />
            </Svg>
          </TrayItem>
          <TrayItem $w={48}><CloudOffIcon /></TrayItem>
          <Stack $w={66} $align="center" $lh={23}>
            <Label $ls={0.3}>ENG</Label>
            <Label $ls={0.3}>IN</Label>
          </Stack>
          <TrayItem $w={48}><WifiIcon /></TrayItem>
          <TrayItem $w={24}><VolumeIcon /></TrayItem>
          <TrayItem $w={48}><BatteryIcon /></TrayItem>
          <Stack $w={105} $align="flex-end">
            <Label>16:23:45</Label>
            <Label $ls={0.5}>27-07-2025</Label>
          </Stack>
          <TrayItem $w={50}><BellIcon /></TrayItem>
        </Tray>
      </Taskbar>

      <Menu>
        {menu.map((m, i) =>
          m.divider ? (
            <MenuDivider key={i} $top={m.top} $bottom={m.bottom} />
          ) : (
            <MenuRow key={i} $h={m.h}>
              <MenuIcon>{m.icon}</MenuIcon>
              <MenuLabel $ls={m.ls} $color={m.disabled ? "#79757c" : undefined}>{m.label}</MenuLabel>
              {m.keys && (
                <Label $ls={m.ks} $color={m.disabled ? "#79757c" : "#49454f"}>{m.keys}</Label>
              )}
            </MenuRow>
          )
        )}
      </Menu>
    </Screen>
  );
}
